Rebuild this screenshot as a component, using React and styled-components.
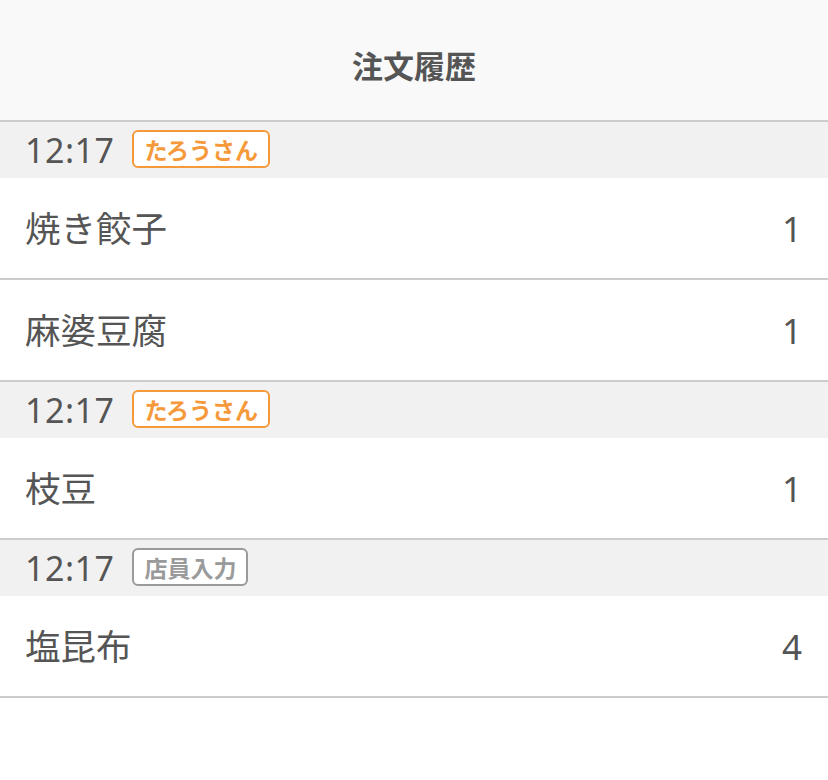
import React from "react";
import styled, { createGlobalStyle } from "styled-components";

const Global = createGlobalStyle`
  html, body { margin: 0; padding: 0; background: #fff; }
  body { font-family: "Noto Sans", "Noto Sans CJK JP", sans-serif; color: #555; }
`;

const Page = styled.div`
  width: 828px;
  min-height: 780px;
  background: #fff;
`;

const Header = styled.header`
  height: 120px;
  background: #f9f9f9;
  border-bottom: 2px solid #cccccc;
  display: flex;
  align-items: center;
  justify-content: center;
`;

const Title = styled.h1`
  margin: 0;
  font-family: "Noto Sans CJK JP", sans-serif;
  font-size: 31px;
  font-weight: 700;
  color: #555;
  padding-top: 8px;
`;

const SectionHead = styled.div`
  height: 56px;
  background: #f2f1f1;
  display: flex;
  align-items: center;
  padding-left: 25px;
  gap: 18px;
`;

const Time = styled.span`
  font-family: "Noto Sans", sans-serif;
  font-size: 34px;
  letter-spacing: 0.5px;
  color: #555;
  line-height: 1;
`;

const Tag = styled.span`
  box-sizing: border-box;
  height: 38px;
  display: inline-flex;
  align-items: center;
  padding: 0 10px;
  margin-top: -2px;
  border: 2px solid ${(p) => (p.$staff ? "#9a9a9a" : "#f5993a")};
  border-radius: 6px;
  background: #fff;
  color: ${(p) => (p.$staff ? "#9a9a9a" : "#f5993a")};
  font-family: "Noto Sans CJK JP", sans-serif;
  font-weight: 700;
  font-size: 23px;
  line-height: 1;
`;

const Row = styled.div`
  height: 100px;
  border-bottom: 2px solid #cccccc;
  display: flex;
  align-items: center;
  justify-content: space-between;
  padding: 0 26px 0 25px;
`;

const Name = styled.span`
  font-family: "Noto Sans CJK JP", sans-serif;
  font-size: 35.5px;
  color: #555;
  margin-top: -3px;
`;

const Qty = styled.span`
  font-family: "Noto Sans", sans-serif;
  font-size: 35px;
  color: #555;
`;

const orders = [
  { time: "12:17", who: "たろうさん", staff: false, items: [["焼き餃子", 1], ["麻婆豆腐", 1]] },
  { time: "12:17", who: "たろうさん", staff: false, items: [["枝豆", 1]] },
  { time: "12:17", who: "店員入力", staff: true, items: [["塩昆布", 4]] },
];

export default function App() {
  return (
    <Page>
      <Global />
      <Header>
        <Title>注文履歴</Title>
      </Header>
      {orders.map((o, i) => (
        <section key={i}>
          <SectionHead>
            <Time>{o.time}</Time>
            <Tag $staff={o.staff}>{o.who}</Tag>
          </SectionHead>
          {o.items.map(([n, q], j) => (
            <Row key={j}>
              <Name>{n}</Name>
              <Qty>{q}</Qty>
            </Row>
          ))}
        </section>
      ))}
    </Page>
  );
}
